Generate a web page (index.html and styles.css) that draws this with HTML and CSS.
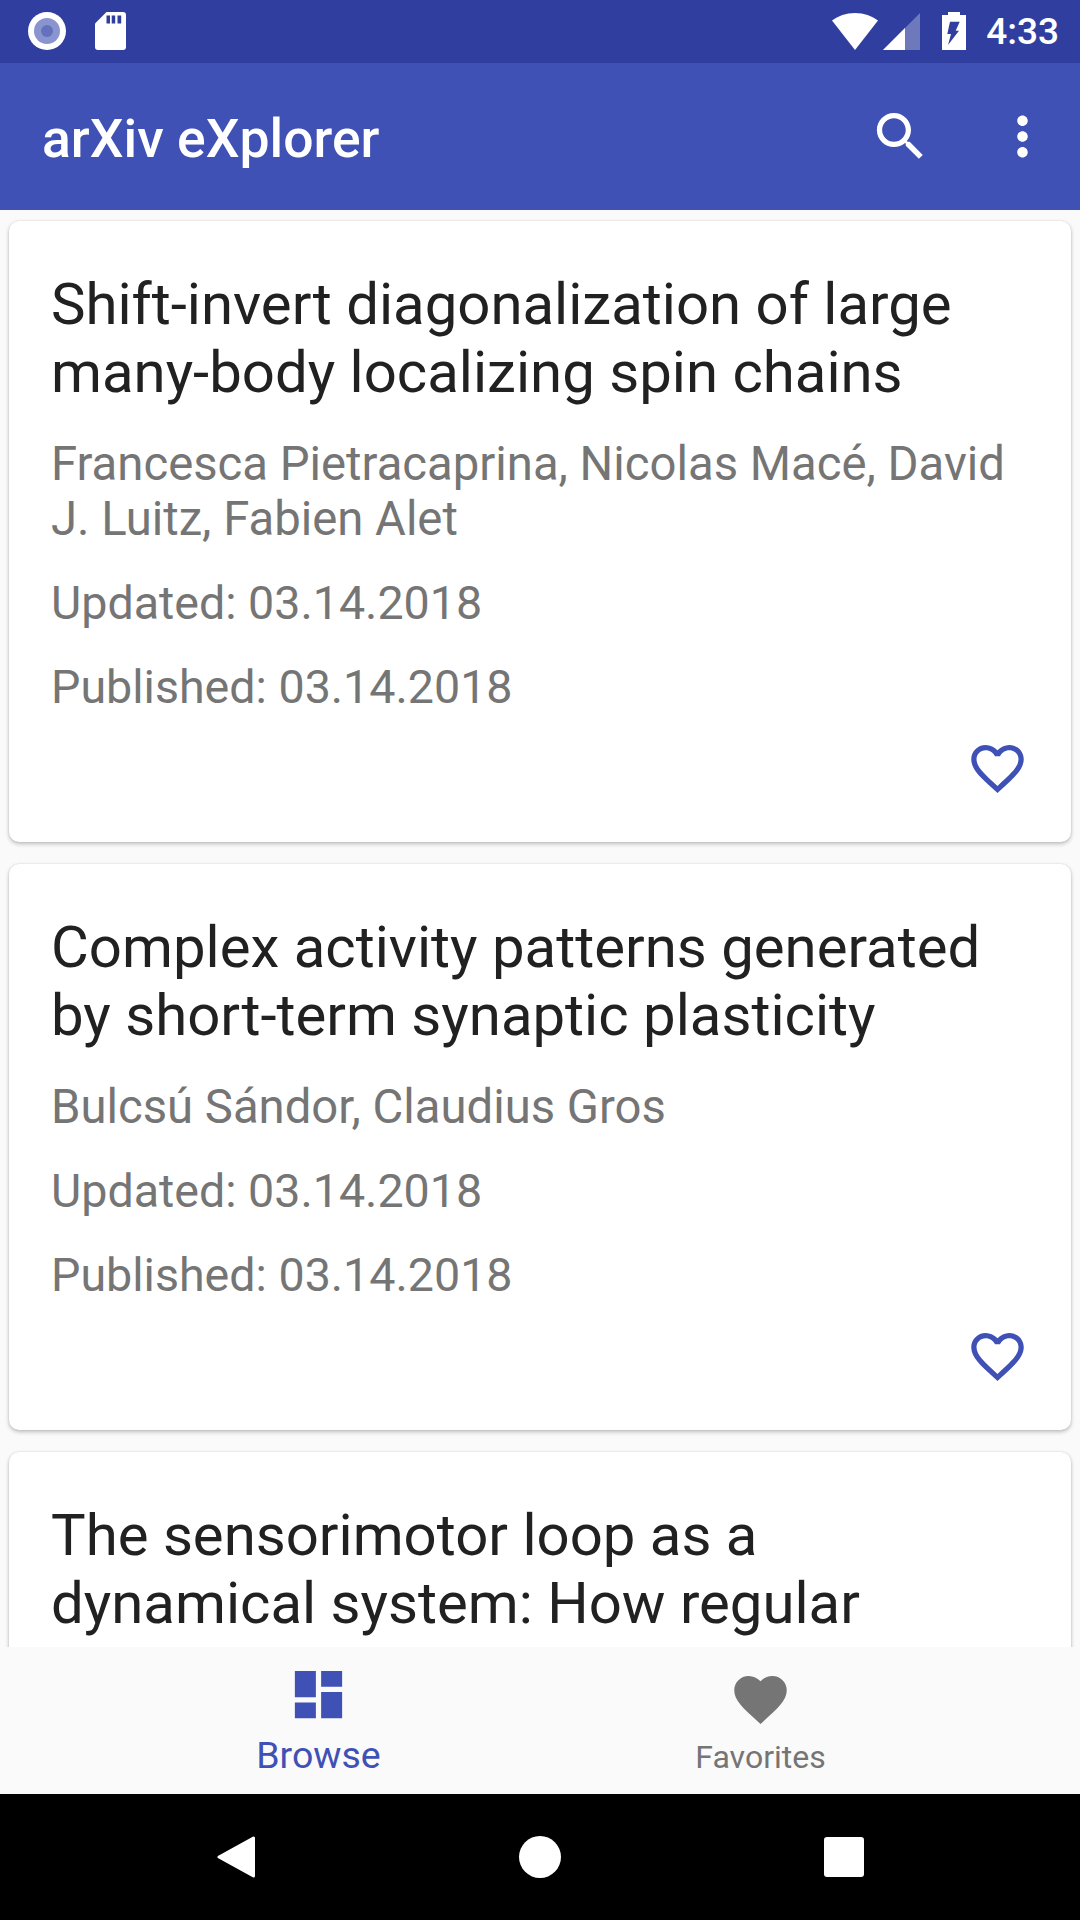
FILE: index.html
```html
<!DOCTYPE html>
<html lang="en">
<head>
    <meta charset="UTF-8">
    <meta name="viewport" content="width=device-width, initial-scale=1.0">
    <title>arXiv eXplorer</title>
    <link rel="stylesheet" href="styles.css">
</head>
<body>
    <div class="screen">
        <div class="status-bar">
            <svg class="status-record" viewBox="0 0 38 38"><circle cx="19" cy="19" r="19" fill="#fff"/><circle cx="19" cy="19" r="13" fill="#8a94cf"/><circle cx="19" cy="19" r="6" fill="#6472be"/></svg>
            <svg class="status-sd" viewBox="0 0 31 38"><path fill="#fff" d="M11.5 0H28a3 3 0 0 1 3 3v32a3 3 0 0 1-3 3H3a3 3 0 0 1-3-3V11.5z"/><path fill="#303f9f" d="M11.5 3.5h3.5v8h-3.500zM16.700 3.500h3.500v8h-3.500zM22.500 3.500h3.700v8h-3.700z"/></svg>
            <span class="status-spacer"></span>
            <svg class="status-wifi" viewBox="0 0 46 37"><path fill="#fff" d="M0 7.500C6 3 14 0 23 0s17 3 23 7.500L23 37z"/></svg>
            <svg class="status-signal" viewBox="0 0 37 37"><path fill="#fff" fill-opacity=".3" d="M0 37L37 0v37z"/><path fill="#fff" d="M0 37L22 15v22z"/></svg>
            <svg class="status-battery" viewBox="0 0 24 38"><path fill="#fff" d="M0 3h6V0h12v3h6v35H0z"/><path fill="#303f9f" d="M8 9.700h9.700l-4 9H17L6 33l3-11H5.300z"/></svg>
            <span class="status-time">4:33</span>
        </div>

        <div class="app-bar">
            <span class="app-title">arXiv eXplorer</span>
            <svg class="icon app-search" viewBox="0 0 24 24"><path fill="#fff" d="M15.500 14h-.79l-.28-.27C15.410 12.590 16 11.110 16 9.500 16 5.910 13.090 3 9.500 3S3 5.910 3 9.500 5.910 16 9.500 16c1.610 0 3.090-.59 4.230-1.570l.27.28v.79l5 4.990L20.490 19l-4.990-5zm-6 0C7.010 14 5 11.990 5 9.500S7.010 5 9.500 5 14 7.010 14 9.500 11.990 14 9.500 14z"/></svg>
            <svg class="icon app-more" viewBox="0 0 24 24"><path fill="#fff" d="M12 8c1.100 0 2-.9 2-2s-.9-2-2-2-2 .9-2 2 .9 2 2 2zm0 2c-1.100 0-2 .9-2 2s.9 2 2 2 2-.9 2-2-.9-2-2-2zm0 6c-1.100 0-2 .9-2 2s.9 2 2 2 2-.9 2-2-.9-2-2-2z"/></svg>
        </div>

        <div class="list">
            <div class="card">
                <h2 class="card-title">Shift-invert diagonalization of large many-body localizing spin chains</h2>
                <p class="card-authors">Francesca Pietracaprina, Nicolas Macé, David J. Luitz, Fabien Alet</p>
                <p class="card-date">Updated: 03.14.2018</p>
                <p class="card-date">Published: 03.14.2018</p>
                <div class="card-actions">
                    <svg class="icon" viewBox="0 0 24 24"><path fill="#3f51b5" d="M16.500 3c-1.740 0-3.410.81-4.500 2.090C10.910 3.810 9.240 3 7.500 3 4.420 3 2 5.420 2 8.500c0 3.780 3.400 6.860 8.550 11.540L12 21.350l1.450-1.320C18.600 15.360 22 12.280 22 8.500 22 5.420 19.580 3 16.500 3zm-4.400 15.550l-.1.100-.1-.1C7.140 14.240 4 11.390 4 8.500 4 6.500 5.500 5 7.500 5c1.540 0 3.040.99 3.570 2.360h1.870C13.460 5.990 14.960 5 16.500 5c2 0 3.500 1.500 3.500 3.500 0 2.890-3.140 5.740-7.900 10.050z"/></svg>
                </div>
            </div>
            <div class="card">
                <h2 class="card-title">Complex activity patterns generated by short-term synaptic plasticity</h2>
                <p class="card-authors">Bulcsú Sándor, Claudius Gros</p>
                <p class="card-date">Updated: 03.14.2018</p>
                <p class="card-date">Published: 03.14.2018</p>
                <div class="card-actions">
                    <svg class="icon" viewBox="0 0 24 24"><path fill="#3f51b5" d="M16.500 3c-1.740 0-3.410.81-4.500 2.090C10.910 3.810 9.240 3 7.500 3 4.420 3 2 5.420 2 8.500c0 3.780 3.400 6.860 8.550 11.540L12 21.350l1.450-1.320C18.600 15.360 22 12.280 22 8.500 22 5.420 19.580 3 16.500 3zm-4.400 15.550l-.1.100-.1-.1C7.140 14.240 4 11.390 4 8.500 4 6.500 5.500 5 7.500 5c1.540 0 3.040.99 3.570 2.360h1.870C13.460 5.990 14.960 5 16.500 5c2 0 3.500 1.500 3.500 3.500 0 2.890-3.140 5.740-7.900 10.050z"/></svg>
                </div>
            </div>
            <div class="card">
                <h2 class="card-title">The sensorimotor loop as a dynamical system: How regular</h2>
            </div>
        </div>

        <div class="bottom-nav">
            <div class="nav-item nav-item-active">
                <svg class="icon" viewBox="0 0 24 24"><path fill="#3f51b5" d="M3 13h8V3H3v10zm0 8h8v-6H3v6zm10 0h8V11h-8v10zm0-18v6h8V3h-8z"/></svg>
                <span class="nav-label">Browse</span>
            </div>
            <div class="nav-item">
                <svg class="icon" viewBox="0 0 24 24"><path fill="#757575" d="M12 21.350l-1.450-1.320C5.400 15.360 2 12.280 2 8.500 2 5.420 4.420 3 7.500 3c1.740 0 3.410.81 4.500 2.090C13.090 3.810 14.760 3 16.500 3 19.580 3 22 5.420 22 8.500c0 3.780-3.400 6.860-8.550 11.540L12 21.350z"/></svg>
                <span class="nav-label">Favorites</span>
            </div>
        </div>

        <div class="system-nav">
            <svg class="sys-back" viewBox="0 0 38 42"><path fill="#fff" stroke="#fff" stroke-width="3" stroke-linejoin="round" d="M2 21L36.500 2v38z"/></svg>
            <span class="sys-home"></span>
            <span class="sys-recent"></span>
        </div>
    </div>
</body>
</html>
```

FILE: styles.css
```css
:root {
    --color-primary: #3f51b5;
    --color-primary-dark: #303f9f;
    --color-background: #fafafa;
    --color-text: #212121;
    --color-text-secondary: #757575;
}

* {
    box-sizing: border-box;
}

html, body {
    margin: 0;
    padding: 0;
}

body {
    font-family: Roboto, "Noto Sans", sans-serif;
    background: var(--color-background);
}

svg {
    display: block;
    flex: none;
}

.icon {
    width: 63px;
    height: 63px;
}

.screen {
    display: flex;
    flex-direction: column;
    width: 1080px;
    height: 1920px;
    overflow: hidden;
}

/* status bar */
.status-bar {
    display: flex;
    align-items: flex-start;
    flex: none;
    height: 63px;
    padding: 12px 21px 0 28px;
    background: var(--color-primary-dark);
}

.status-record {
    width: 38px;
    height: 38px;
}

.status-sd {
    width: 31px;
    height: 38px;
    margin-left: 29px;
}

.status-spacer {
    flex: 1;
}

.status-wifi {
    width: 46px;
    height: 37px;
    margin-top: 1px;
}

.status-signal {
    width: 37px;
    height: 37px;
    margin: 1px 0 0 5px;
}

.status-battery {
    width: 24px;
    height: 38px;
    margin-left: 22px;
}

.status-time {
    margin: 1px 0 0 20px;
    font-size: 37px;
    font-weight: 500;
    line-height: 38px;
    color: #fff;
}

/* app bar */
.app-bar {
    display: flex;
    align-items: center;
    flex: none;
    height: 147px;
    padding: 0 26px 0 42px;
    background: var(--color-primary);
}

.app-title {
    flex: 1;
    padding-top: 3px;
    font-size: 53.500px;
    font-weight: 500;
    color: #fff;
}

.app-more {
    margin-left: 59px;
}

/* cards */
.list {
    flex: 1;
    min-height: 0;
    overflow: hidden;
    padding: 11px 9px 0 9px;
}

.card {
    margin-bottom: 22px;
    padding: 49px 42px 42px 42px;
    background: #fff;
    border-radius: 10px;
    box-shadow: 0 0 2px rgba(0, 0, 0, 0.12), 0 2px 4px rgba(0, 0, 0, 0.24);
}

.card-title {
    margin: 0 0 31px;
    font-size: 58.100px;
    font-weight: 400;
    line-height: 68px;
    color: var(--color-text);
}

.card-authors {
    margin: 0 0 29px;
    font-size: 47.250px;
    line-height: 55px;
    color: var(--color-text-secondary);
}

.card-date {
    margin: 0 0 29px;
    font-size: 46.600px;
    line-height: 55px;
    color: var(--color-text-secondary);
}

.card-actions {
    display: flex;
    justify-content: flex-end;
    margin-top: -7px;
}

/* bottom navigation */
.bottom-nav {
    display: flex;
    justify-content: center;
    flex: none;
    height: 147px;
    background: var(--color-background);
}

.nav-item {
    display: flex;
    flex-direction: column;
    align-items: center;
    width: 441px;
    padding-top: 21px;
    font-size: 32px;
    color: var(--color-text-secondary);
}

.nav-item .nav-label {
    margin-top: 6px;
}

.nav-item-active {
    padding-top: 16px;
    padding-right: 2px;
    font-size: 37.500px;
    color: var(--color-primary);
}

.nav-item-active .nav-label {
    margin-top: 9px;
}

.nav-label {
    line-height: 40px;
}

/* android navigation */
.system-nav {
    display: flex;
    align-items: center;
    justify-content: space-between;
    flex: none;
    height: 126px;
    padding: 0 216px 0 217px;
    background: #000;
}

.sys-back {
    width: 38px;
    height: 42px;
}

.sys-home {
    width: 42px;
    height: 42px;
    border-radius: 50%;
    background: #fff;
}

.sys-recent {
    width: 40px;
    height: 40px;
    border-radius: 3px;
    background: #fff;
}
```
